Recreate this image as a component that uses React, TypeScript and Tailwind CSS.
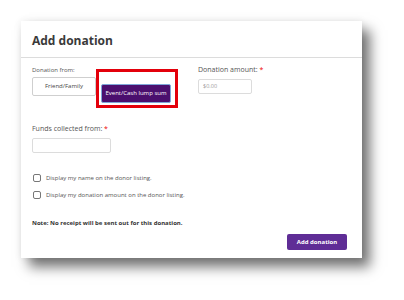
import React from "react";

const font = { fontFamily: '"Open Sans", "Liberation Sans", sans-serif' };

export default function App() {
  return (
    <div className="w-[404px] h-[300px] bg-white overflow-hidden" style={font}>
      <div className="pl-[21px] pt-[21px]">
        <div className="relative w-[341px] h-[237px] bg-white shadow-[8px_9px_12px_rgba(0,0,0,0.55),0_0_8px_rgba(0,0,0,0.08)]">
          <div className="h-[37px] border-b border-[#dcdcdc] pl-[11px] pt-[3px] flex items-center">
            <span className="text-[12px] font-bold text-[#3a3a3a] leading-none">Add donation</span>
          </div>
          <div className="pl-[11px] pr-[15px] flex flex-col">
            <div className="flex mt-[8px]">
              <div className="w-[166px] flex flex-col">
                <span className="text-[6px] text-[#555] leading-[8px]">Donation from:</span>
                <div className="flex gap-[5px] mt-[3px]">
                  <button className="w-[64px] h-[19px] border border-[#cfcfcf] rounded-[2px] bg-white text-[6px] text-[#444]">
                    Friend/Family
                  </button>
                  <div className="relative">
                    <button className="w-[70px] h-[19px] border border-[#7fa7d8] rounded-[2px] bg-[#4b0f6e] text-[6px] text-white">
                      Event/Cash lump sum
                    </button>
                    <div className="absolute left-[-5px] top-[-8px] w-[82px] h-[39px] border-[3px] border-[#e3000b]" />
                  </div>
                </div>
              </div>
              <div className="flex flex-col">
                <span className="text-[7px] text-[#555] leading-[10px] -mt-[1px]">
                  Donation amount: <span className="text-[#e00]">*</span>
                </span>
                <div className="mt-[4px] w-[54px] h-[15px] border border-[#dcdcdc] rounded-[2px] flex items-center pl-[4px] text-[5.5px] text-[#999]">
                  $0.00
                </div>
              </div>
            </div>
            <span className="text-[7px] text-[#555] leading-[10px] mt-[21px]">
              Funds collected from: <span className="text-[#e00]">*</span>
            </span>
            <div className="mt-[4px] w-[79px] h-[15px] border border-[#dcdcdc] rounded-[2px]" />
            <div className="flex items-center gap-[5px] mt-[21px] ml-[1px]">
              <div className="w-[8px] h-[8px] border border-[#777] rounded-[2px]" />
              <span className="text-[6px] text-[#555] leading-[8px]">Display my name on the donor listing.</span>
            </div>
            <div className="flex items-center gap-[5px] mt-[9px] ml-[1px]">
              <div className="w-[8px] h-[8px] border border-[#777] rounded-[2px]" />
              <span className="text-[6px] text-[#555] leading-[8px]">Display my donation amount on the donor listing.</span>
            </div>
            <span className="text-[6px] font-bold text-[#333] leading-[8px] mt-[20px]">
              Note: No receipt will be sent out for this donation.
            </span>
            <div className="flex justify-end mt-[7px]">
              <button className="w-[60px] h-[16px] rounded-[2px] bg-[#5f2d96] text-[6px] font-bold text-white">
                Add donation
              </button>
            </div>
          </div>
        </div>
      </div>
    </div>
  );
}
